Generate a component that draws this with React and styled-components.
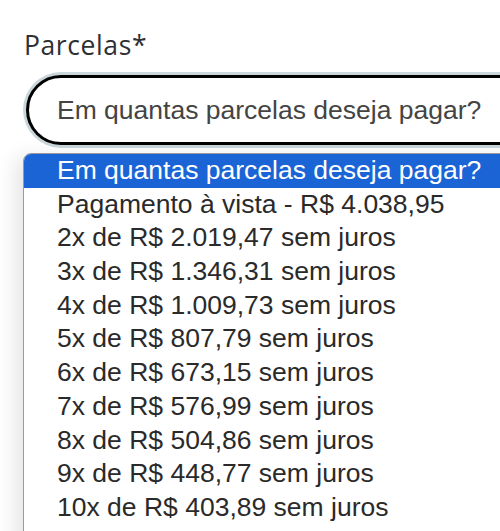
import styled, { createGlobalStyle } from 'styled-components';

const GlobalStyle = createGlobalStyle`
  html, body {
    margin: 0;
    padding: 0;
    background: #ffffff;
    overflow: hidden;
  }
`;

const Page = styled.div`
  width: 500px;
  height: 531px;
  overflow: hidden;
  padding: 28px 0 0 23px;
  box-sizing: border-box;
`;

const Field = styled.div`
  display: flex;
  flex-direction: column;
  width: 560px;
`;

const Label = styled.label`
  font-family: 'Open Sans', 'Liberation Sans', sans-serif;
  font-size: 26.5px;
  letter-spacing: 0.6px;
  line-height: 35px;
  color: #2e3033;
  padding-left: 1px;
  margin-bottom: 9px;
`;

const SelectBox = styled.div`
  height: 64px;
  margin: 3px;
  display: flex;
  align-items: center;
  padding-left: 28px;
  border: 3px solid #000000;
  border-radius: 38px;
  box-shadow: 0 0 0 3px #c9d6da;
  font-family: 'Liberation Sans', Arial, sans-serif;
  font-size: 26.5px;
  color: #444444;
  background: #ffffff;
`;

const OptionList = styled.ul`
  list-style: none;
  margin: 5px 0 0 0;
  padding: 0 0 60px 0;
  border: 1px solid #9a9a9a;
  border-radius: 8px 0 0 0;
  overflow: hidden;
  background: #ffffff;
  box-shadow: -8px 4px 20px rgba(0, 0, 0, 0.1);
`;

const Option = styled.li`
  height: 33.7px;
  line-height: 33.7px;
  padding-left: 33px;
  font-family: 'Liberation Sans', Arial, sans-serif;
  font-size: 26.5px;
  white-space: nowrap;
  color: ${(p) => (p.$active ? '#ffffff' : '#2a2a2a')};
  background: ${(p) => (p.$active ? '#1a64d6' : 'transparent')};
`;

const options = [
  'Em quantas parcelas deseja pagar?',
  'Pagamento à vista - R$ 4.038,95',
  '2x de R$ 2.019,47 sem juros',
  '3x de R$ 1.346,31 sem juros',
  '4x de R$ 1.009,73 sem juros',
  '5x de R$ 807,79 sem juros',
  '6x de R$ 673,15 sem juros',
  '7x de R$ 576,99 sem juros',
  '8x de R$ 504,86 sem juros',
  '9x de R$ 448,77 sem juros',
  '10x de R$ 403,89 sem juros',
];

function App() {
  return (
    <>
      <GlobalStyle />
      <Page>
        <Field>
          <Label>Parcelas*</Label>
          <SelectBox>Em quantas parcelas deseja pagar?</SelectBox>
          <OptionList>
            {options.map((text, i) => (
              <Option key={text} $active={i === 0}>
                {text}
              </Option>
            ))}
          </OptionList>
        </Field>
      </Page>
    </>
  );
}

export default App;
